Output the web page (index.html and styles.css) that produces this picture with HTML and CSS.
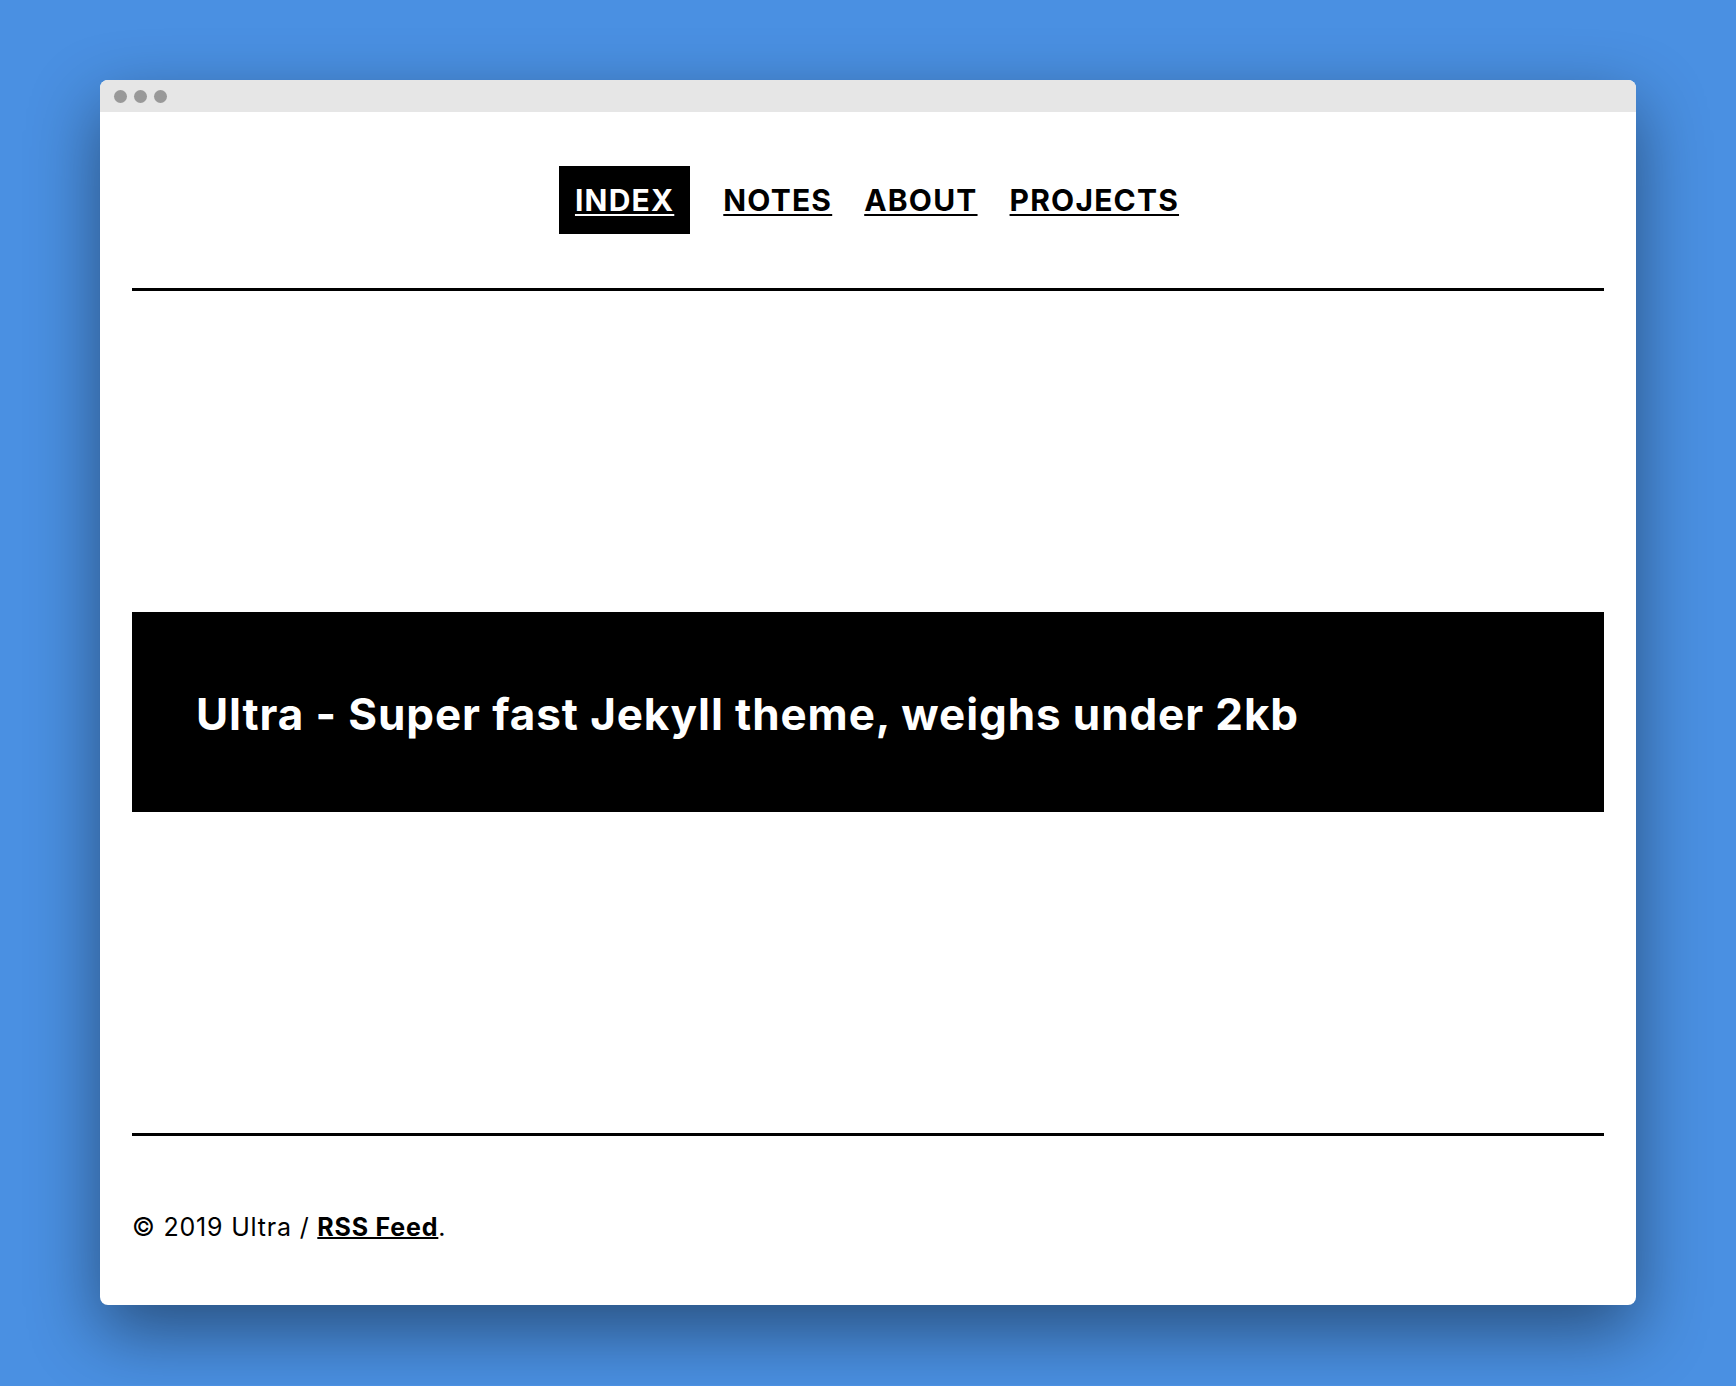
FILE: index.html
```html
<!DOCTYPE html>
<html lang="en">
<head>
<meta charset="utf-8">
<title>Ultra</title>
<link rel="stylesheet" href="styles.css">
</head>
<body>
<div class="window">
  <div class="titlebar">
    <span class="dot"></span><span class="dot"></span><span class="dot"></span>
  </div>
  <header class="header">
    <nav class="nav">
      <a class="nav-link active" href="#">INDEX</a>
      <a class="nav-link" href="#">NOTES</a>
      <a class="nav-link" href="#">ABOUT</a>
      <a class="nav-link" href="#">PROJECTS</a>
    </nav>
  </header>
  <hr class="rule">
  <main class="main">
    <div class="hero">
      <h1 class="hero-title">Ultra - Super fast Jekyll theme, weighs under 2kb</h1>
    </div>
  </main>
  <hr class="rule">
  <footer class="footer">
    <p class="footer-text">© 2019 Ultra / <a class="footer-link" href="#">RSS Feed</a>.</p>
  </footer>
</div>
</body>
</html>
```

FILE: styles.css
```css
html, body {
  margin: 0;
  padding: 0;
}
body {
  background: #4a90e2;
  padding: 80px 100px;
  font-family: Inter, "Noto Sans", "Liberation Sans", sans-serif;
  color: #000;
}
.window {
  width: 1536px;
  height: 1225px;
  background: #fff;
  border-radius: 8px;
  overflow: hidden;
  display: flex;
  flex-direction: column;
  box-shadow: 0 26px 70px rgba(0, 0, 0, 0.45);
}
.titlebar {
  height: 32px;
  flex: none;
  background: #e6e6e6;
  display: flex;
  align-items: center;
  gap: 7px;
  padding-left: 14px;
}
.dot {
  width: 13px;
  height: 13px;
  border-radius: 50%;
  background: #999;
}
.header {
  flex: none;
  padding: 54px 32px;
}
.nav {
  display: flex;
  justify-content: center;
  align-items: center;
  gap: 0;
  padding-left: 18px;
}
.nav-link {
  display: block;
  padding: 16px;
  font-size: 30px;
  line-height: 36px;
  font-weight: 700;
  letter-spacing: 1.2px;
  color: #000;
  text-decoration: underline;
  text-decoration-thickness: 2px;
  text-underline-offset: 3px;
}
.nav-link.active {
  background: #000;
  color: #fff;
  margin-right: 17px;
}
.rule {
  flex: none;
  margin: 0 32px;
  border: 0;
  height: 3px;
  background: #000;
}
.main {
  flex: 1;
  display: flex;
  flex-direction: column;
  justify-content: center;
  padding: 0 32px;
}
.hero {
  background: #000;
  color: #fff;
  height: 200px;
  display: flex;
  align-items: center;
  padding: 4px 64px 0;
  box-sizing: border-box;
}
.hero-title {
  margin: 0;
  font-size: 44px;
  line-height: 56px;
  font-weight: 700;
  letter-spacing: 0.9px;
}
.footer {
  flex: none;
  padding: 75px 32px 61px;
}
.footer-text {
  margin: 0;
  font-size: 25px;
  line-height: 33px;
  letter-spacing: 0.8px;
}
.footer-link {
  color: #000;
  font-weight: 700;
  text-decoration: underline;
  text-decoration-thickness: 2px;
}
```
